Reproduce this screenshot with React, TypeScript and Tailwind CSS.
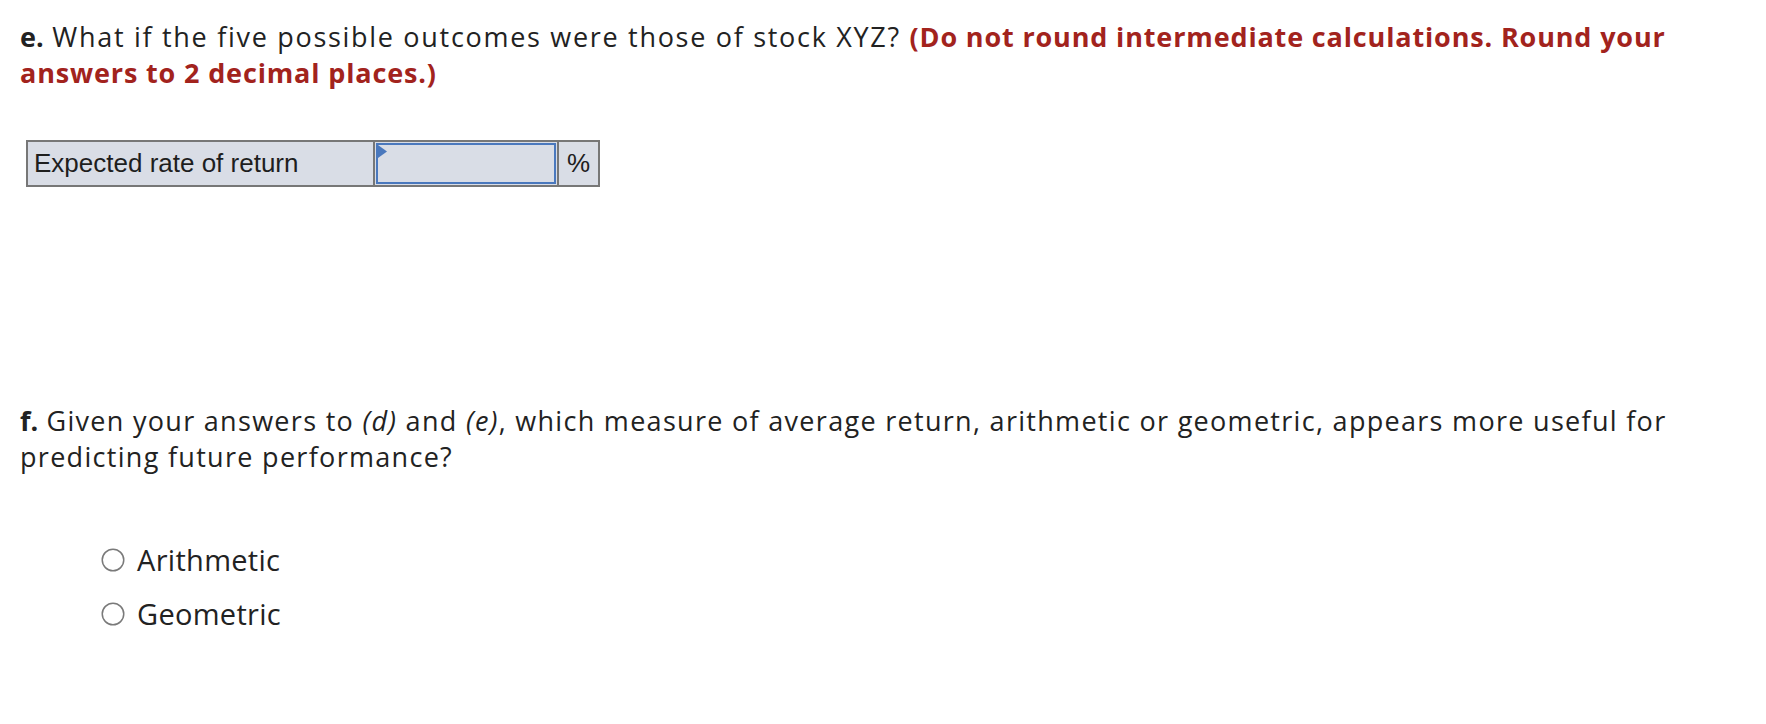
import React, { useState } from 'react';

const options = ['Arithmetic', 'Geometric'];

const RadioCircle: React.FC<{ checked: boolean }> = ({ checked }) => (
  <svg width="24" height="24" viewBox="0 0 24 24" className="shrink-0">
    <circle cx="12" cy="12" r="10.75" fill="white" stroke="#7a7a7a" strokeWidth="1.5" />
    {checked && <circle cx="12" cy="12" r="6" fill="#2e62b3" />}
  </svg>
);

const App: React.FC = () => {
  const [choice, setChoice] = useState<string | null>(null);
  const [answer, setAnswer] = useState('');

  return (
    <div className="min-h-screen bg-white pl-5 pt-[19px] text-[#222] font-['Open_Sans',sans-serif]">
      {/* Part e */}
      <p className="text-[27px] leading-[36px] tracking-[1.7px] pr-10">
        <span className="font-bold tracking-normal">e.</span> What if the five possible outcomes were those of stock XYZ?{' '}
        <span className="font-bold tracking-[0.85px] text-[#a2231d]">
          (Do not round intermediate calculations. Round your answers to 2 decimal places.)
        </span>
      </p>

      <div className="mt-[49px] ml-[6px] flex w-[574px] h-[47px] border-2 border-[#777] bg-[#d9dde6] font-['Liberation_Sans',Arial,sans-serif] text-[26px] text-[#1e1e1e]">
        <div className="w-[347px] flex items-center pl-[6px] border-r-2 border-[#777]">Expected rate of return</div>
        <div className="w-[184px] p-px border-r-2 border-[#777]">
          <div className="relative h-full border-2 border-[#4a78bd]">
            <svg width="9" height="13" viewBox="0 0 9 13" className="absolute left-0 top-0">
              <polygon points="0,0 9,6.5 0,13" fill="#4a78bd" />
            </svg>
            <input
              value={answer}
              onChange={e => setAnswer(e.target.value)}
              className="w-full h-full bg-transparent outline-none px-2 text-right"
            />
          </div>
        </div>
        <div className="flex-1 flex items-center justify-center">%</div>
      </div>

      {/* Part f */}
      <p className="mt-[216px] text-[27px] leading-[36px] tracking-[1.3px] pr-10">
        <span className="font-bold tracking-normal">f.</span> Given your answers to <i>(d)</i> and <i>(e)</i>, which measure of average return, arithmetic or geometric, appears more useful for predicting future performance?
      </p>

      <div className="mt-[58px] ml-[81px] flex flex-col">
        {options.map(opt => (
          <label key={opt} className="flex items-center h-[54px] gap-3 cursor-pointer text-[29px] tracking-[0.3px]">
            <input
              type="radio"
              name="measure"
              className="sr-only"
              checked={choice === opt}
              onChange={() => setChoice(opt)}
            />
            <RadioCircle checked={choice === opt} />
            <span>{opt}</span>
          </label>
        ))}
      </div>
    </div>
  );
};

export default App;
